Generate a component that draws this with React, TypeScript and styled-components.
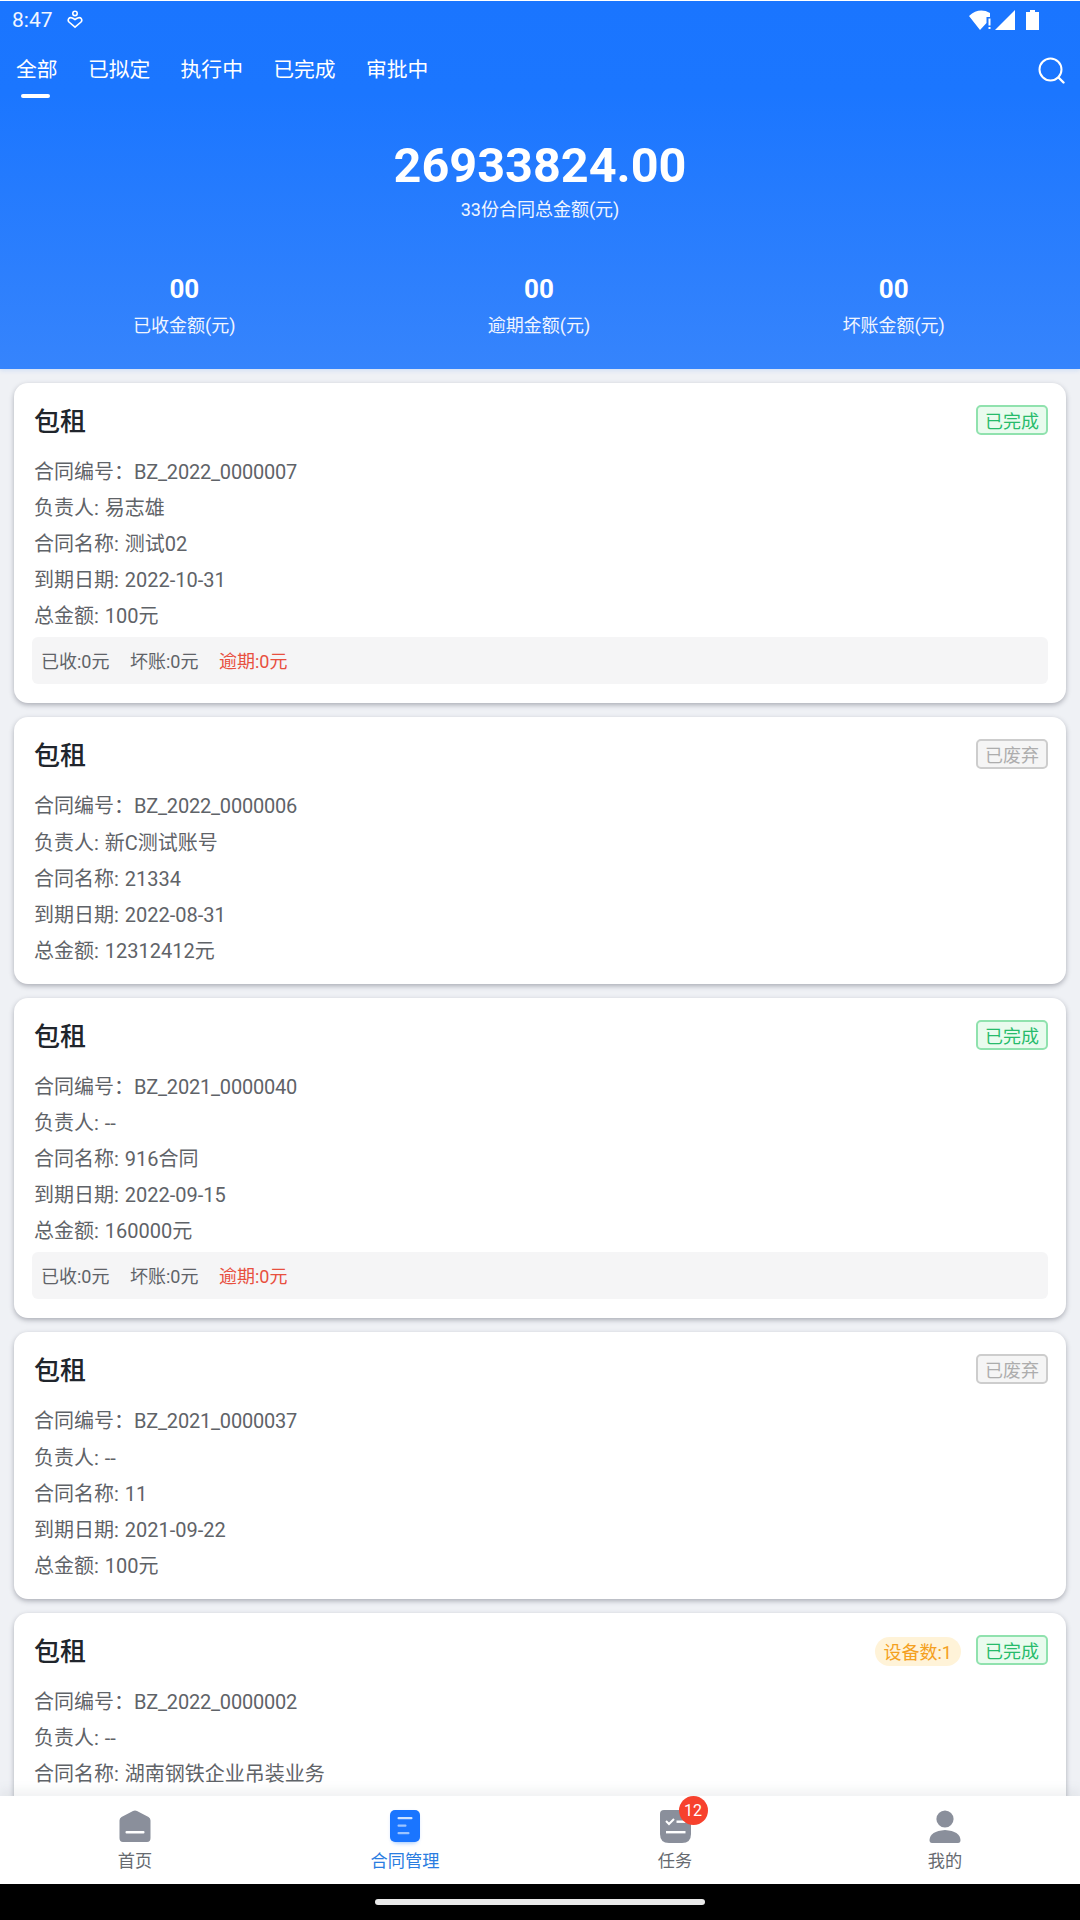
import React from "react";
import styled, { createGlobalStyle } from "styled-components";

const Global = createGlobalStyle`
  html, body { margin: 0; padding: 0; background: #000; }
  body { font-family: Roboto, "Noto Sans CJK SC", sans-serif; }
  * { box-sizing: border-box; }
`;

const Screen = styled.div`
  width: 1080px;
  height: 1920px;
  display: flex;
  flex-direction: column;
  overflow: hidden;
  background: #eff1f5;
`;

const Header = styled.header`
  flex: none;
  height: 369px;
  border-top: 1px solid #fff;
  background: linear-gradient(180deg, #1a75ff 0%, #1b76ff 25%, #3684fc 100%);
  color: #fff;
  box-shadow: 0 1px 5px rgba(40, 120, 250, 0.18);
  position: relative;
  z-index: 1;
`;

const StatusBar = styled.div`
  height: 37px;
  padding: 0 41px 0 12px;
  display: flex;
  align-items: center;
  justify-content: space-between;
`;

const StatusLeft = styled.div`
  display: flex;
  align-items: center;
  gap: 14px;
`;

const Clock = styled.span`
  font-size: 21px;
  color: #f2f6ff;
`;

const StatusRight = styled.div`
  display: flex;
  align-items: center;
  gap: 3px;
`;

const TabRow = styled.nav`
  height: 64px;
  padding: 0 15px 0 16px;
  display: flex;
  align-items: center;
  justify-content: space-between;
`;

const Tabs = styled.div`
  display: flex;
  gap: 30.3px;
`;

const Tab = styled.span<{ $active?: boolean }>`
  position: relative;
  font-size: 20.8px;
  line-height: 28px;
  color: #fff;
  &::after {
    content: "";
    display: ${(p) => (p.$active ? "block" : "none")};
    position: absolute;
    left: 5px;
    right: 8px;
    bottom: -14px;
    height: 4px;
    border-radius: 2px;
    background: #fff;
  }
`;

const Total = styled.div`
  margin-top: 36px;
  text-align: center;
`;

const Amount = styled.div`
  font-size: 48.6px;
  font-weight: 700;
  line-height: 56px;
`;

const Caption = styled.div`
  font-size: 18px;
  line-height: 24px;
  margin-top: 4px;
  color: #f0f5ff;
`;

const Stats = styled.div`
  margin-top: 51px;
  display: grid;
  grid-template-columns: 1fr 1fr 1fr;
  padding: 0 9px 0 7px;
  text-align: center;
`;

const StatValue = styled.div`
  font-size: 26px;
  font-weight: 700;
  line-height: 32px;
`;

const StatLabel = styled.div`
  font-size: 18px;
  line-height: 24px;
  margin-top: 9px;
  color: #f0f5ff;
`;

const List = styled.main`
  flex: 1;
  min-height: 0;
  overflow: hidden;
  padding: 14px 14px 0;
  display: flex;
  flex-direction: column;
  gap: 14px;
`;

const Card = styled.article`
  flex: none;
  background: #fff;
  border-radius: 14px;
  padding: 22px 18px 15px 20px;
  box-shadow: 0 2px 5px rgba(60, 64, 80, 0.38);
  &:last-child {
    min-height: 320px;
  }
`;

const CardTop = styled.div`
  height: 49px;
  display: flex;
  align-items: flex-start;
  justify-content: space-between;
`;

const CardTitle = styled.h2`
  margin: 1px 0 0;
  font-size: 26px;
  line-height: 32px;
  font-weight: 500;
  color: #20252c;
`;

const Tags = styled.div`
  display: flex;
  align-items: center;
  gap: 15px;
`;

const Status = styled.span<{ $kind: "done" | "void" }>`
  height: 30px;
  padding: 0 7px;
  display: flex;
  align-items: center;
  font-size: 18px;
  border-radius: 5px;
  border: 2px solid ${(p) => (p.$kind === "done" ? "#90e2ae" : "#cdcdcd")};
  background: ${(p) => (p.$kind === "done" ? "#e9fbee" : "#f5f5f5")};
  color: ${(p) => (p.$kind === "done" ? "#27bb6b" : "#adadad")};
`;

const DevicePill = styled.span`
  height: 29px;
  padding: 0 9px;
  display: flex;
  align-items: center;
  font-size: 18px;
  border-radius: 15px;
  margin-top: 2px;
  background: #fff3d8;
  color: #f4a020;
`;

const Row = styled.div`
  font-size: 20px;
  line-height: 36.1px;
  color: #5f6368;
  white-space: nowrap;
  word-spacing: 1px;
`;

const Code = styled.span`
  letter-spacing: -0.2px;
`;

const Summary = styled.div`
  margin: 3px 0 4px -2px;
  height: 47px;
  padding: 0 9px 2px;
  display: flex;
  align-items: center;
  gap: 20.5px;
  border-radius: 6px;
  background: #f5f5f6;
  font-size: 18px;
  color: #5f6368;
`;

const Overdue = styled.span`
  color: #e8503f;
`;

const TabBar = styled.footer`
  flex: none;
  height: 88px;
  background: #fff;
  display: grid;
  grid-template-columns: repeat(4, 1fr);
  position: relative;
  z-index: 1;
  box-shadow: 0 -6px 10px rgba(120, 125, 140, 0.1);
`;

const NavItem = styled.div`
  display: flex;
  flex-direction: column;
  align-items: center;
  padding-top: 13px;
`;

const IconWrap = styled.div`
  position: relative;
  height: 34px;
  display: flex;
  align-items: center;
`;

const Count = styled.span`
  position: absolute;
  left: 19px;
  top: -13px;
  width: 29px;
  height: 29px;
  border-radius: 50%;
  background: #f7412d;
  color: #fff;
  font-size: 16px;
  display: flex;
  align-items: center;
  justify-content: center;
`;

const NavLabel = styled.span<{ $active?: boolean }>`
  margin-top: 5px;
  font-size: 17.2px;
  line-height: 26px;
  color: ${(p) => (p.$active ? "#2a7de1" : "#666a70")};
`;

const GestureBar = styled.div`
  flex: none;
  height: 36px;
  background: #000;
  display: flex;
  justify-content: center;
  padding-top: 15px;
`;

const Handle = styled.div`
  width: 330px;
  height: 6px;
  border-radius: 3px;
  background: #e9e9e9;
`;

const GRAY = "#8a8f9b";

const HealthIcon = () => (
  <svg width="16" height="19" viewBox="0 0 16 19" fill="none" stroke="#fff" strokeWidth="1.6">
    <circle cx="8" cy="3.4" r="2.2" />
    <path d="M8 17.2 L2 12 Q.6 10.4 1.6 8.8 Q3 7 5.2 8 Q7 8.8 8 9.6 Q9 8.8 10.8 8 Q13 7 14.4 8.8 Q15.4 10.4 14 12 Z" />
  </svg>
);

const WifiIcon = () => (
  <svg width="23" height="20" viewBox="0 0 23 20">
    <path d="M0 6 Q10 -3 21 3 L21 7 L17.5 7 L17.5 13 L11 20 Z" fill="#fff" />
    <rect x="19.5" y="8.5" width="2" height="7" fill="#fff" />
    <rect x="19.5" y="17" width="2" height="2" fill="#fff" />
  </svg>
);

const SignalIcon = () => (
  <svg width="20" height="20" viewBox="0 0 20 20">
    <path d="M20 0 V20 H0 Z" fill="#fff" />
  </svg>
);

const BatteryIcon = () => (
  <svg width="13" height="20" viewBox="0 0 13 20" style={{ marginLeft: 8 }}>
    <path d="M4 0 H9 V2 H13 V20 H0 V2 H4 Z" fill="#fff" />
  </svg>
);

const SearchIcon = () => (
  <svg width="27" height="27" viewBox="0 0 27 27" fill="none" stroke="#fff" strokeWidth="2" strokeLinecap="round">
    <circle cx="12.5" cy="12.5" r="11" />
    <path d="M20.5 20.5 L25.5 25.5" strokeWidth="2.4" />
  </svg>
);

const HomeIcon = () => (
  <svg width="32" height="32" viewBox="0 0 32 32">
    <path d="M14 1 Q16 0 18 1 L29.5 7 Q31.5 8 31.5 10.5 V28 Q31.5 32 28 32 H4 Q.5 32 .5 28 V10.5 Q.5 8 2.5 7 Z" fill={GRAY} />
    <rect x="6.5" y="21" width="19" height="2.6" rx="1" fill="#fff" />
  </svg>
);

const ContractIcon = () => (
  <svg width="40" height="42" viewBox="0 0 40 42" style={{ margin: "0 -5px" }}>
    <defs>
      <filter id="cglow" x="-30%" y="-30%" width="160%" height="160%">
        <feGaussianBlur stdDeviation="2" />
      </filter>
    </defs>
    <rect x="7" y="8" width="26" height="30" rx="5" fill="#6aa8ff" opacity="0.7" filter="url(#cglow)" />
    <rect x="5" y="5" width="30" height="32" rx="5" fill="#1a75ff" />
    <rect x="12.5" y="12" width="15" height="2.2" rx="1" fill="#cfe2ff" />
    <rect x="12.5" y="19.5" width="9" height="2.2" rx="1" fill="#9cc4ff" />
    <rect x="12.5" y="27" width="12" height="2.2" rx="1" fill="#9cc4ff" />
  </svg>
);

const TaskIcon = () => (
  <svg width="31" height="33" viewBox="0 0 31 33">
    <path d="M4 0 H27 Q31 0 31 4 V24 Q31 33 22 33 H9 Q0 33 0 24 V4 Q0 0 4 0 Z" fill={GRAY} />
    <path d="M6 11 L9 14 L14 9" stroke="#fff" strokeWidth="2" fill="none" />
    <rect x="16.5" y="10.5" width="9" height="2.4" fill="#fff" />
    <rect x="6" y="21" width="19.5" height="2.4" fill="#fff" />
  </svg>
);

const PersonIcon = () => (
  <svg width="32" height="33" viewBox="0 0 32 33">
    <circle cx="16" cy="9" r="8.6" fill={GRAY} />
    <path d="M.5 30 Q1 21 16 20 Q31 21 31.5 30 Q31.5 33 29 33 H3 Q.5 33 .5 30 Z" fill={GRAY} />
  </svg>
);

type Contract = {
  no: string;
  owner: string;
  name: string;
  due?: string;
  total?: string;
  status: "done" | "void";
  devices?: string;
};

const contracts: Contract[] = [
  { no: "BZ_2022_0000007", owner: "易志雄", name: "测试02", due: "2022-10-31", total: "100元", status: "done" },
  { no: "BZ_2022_0000006", owner: "新C测试账号", name: "21334", due: "2022-08-31", total: "12312412元", status: "void" },
  { no: "BZ_2021_0000040", owner: "--", name: "916合同", due: "2022-09-15", total: "160000元", status: "done" },
  { no: "BZ_2021_0000037", owner: "--", name: "11", due: "2021-09-22", total: "100元", status: "void" },
  { no: "BZ_2022_0000002", owner: "--", name: "湖南钢铁企业吊装业务", status: "done", devices: "设备数:1" },
];

const tabs = ["全部", "已拟定", "执行中", "已完成", "审批中"];
const stats = ["已收金额(元)", "逾期金额(元)", "坏账金额(元)"];

export default function App() {
  return (
    <Screen>
      <Global />
      <Header>
        <StatusBar>
          <StatusLeft>
            <Clock>8:47</Clock>
            <HealthIcon />
          </StatusLeft>
          <StatusRight>
            <WifiIcon />
            <SignalIcon />
            <BatteryIcon />
          </StatusRight>
        </StatusBar>
        <TabRow>
          <Tabs>
            {tabs.map((t, i) => (
              <Tab key={t} $active={i === 0}>{t}</Tab>
            ))}
          </Tabs>
          <SearchIcon />
        </TabRow>
        <Total>
          <Amount>26933824.00</Amount>
          <Caption>33份合同总金额(元)</Caption>
        </Total>
        <Stats>
          {stats.map((s) => (
            <div key={s}>
              <StatValue>00</StatValue>
              <StatLabel>{s}</StatLabel>
            </div>
          ))}
        </Stats>
      </Header>
      <List>
        {contracts.map((c) => (
          <Card key={c.no}>
            <CardTop>
              <CardTitle>包租</CardTitle>
              <Tags>
                {c.devices && <DevicePill>{c.devices}</DevicePill>}
                <Status $kind={c.status}>{c.status === "done" ? "已完成" : "已废弃"}</Status>
              </Tags>
            </CardTop>
            <Row>合同编号：<Code>{c.no}</Code></Row>
            <Row>负责人: {c.owner}</Row>
            <Row>合同名称: {c.name}</Row>
            {c.due && <Row>到期日期: {c.due}</Row>}
            {c.total && <Row>总金额: {c.total}</Row>}
            {c.status === "done" && c.total && (
              <Summary>
                <span>已收:0元</span>
                <span>坏账:0元</span>
                <Overdue>逾期:0元</Overdue>
              </Summary>
            )}
          </Card>
        ))}
      </List>
      <TabBar>
        <NavItem>
          <IconWrap><HomeIcon /></IconWrap>
          <NavLabel>首页</NavLabel>
        </NavItem>
        <NavItem>
          <IconWrap><ContractIcon /></IconWrap>
          <NavLabel $active>合同管理</NavLabel>
        </NavItem>
        <NavItem>
          <IconWrap>
            <TaskIcon />
            <Count>12</Count>
          </IconWrap>
          <NavLabel>任务</NavLabel>
        </NavItem>
        <NavItem>
          <IconWrap><PersonIcon /></IconWrap>
          <NavLabel>我的</NavLabel>
        </NavItem>
      </TabBar>
      <GestureBar>
        <Handle />
      </GestureBar>
    </Screen>
  );
}
